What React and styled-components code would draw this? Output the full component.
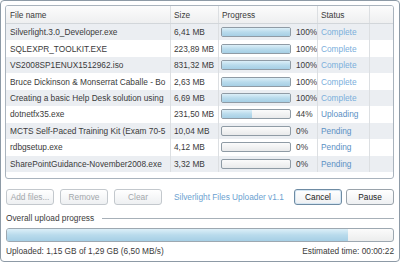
import React from 'react';
import styled, { createGlobalStyle } from 'styled-components';

const Global = createGlobalStyle`
  html, body { margin: 0; padding: 0; background: #fff; }
  body { font-family: "Liberation Sans", Arial, sans-serif; }
`;

const files = [
  { name: 'Silverlight.3.0_Developer.exe', size: '6,41 MB', pct: 100, status: 'Complete' },
  { name: 'SQLEXPR_TOOLKIT.EXE', size: '223,89 MB', pct: 100, status: 'Complete' },
  { name: 'VS2008SP1ENUX1512962.iso', size: '831,32 MB', pct: 100, status: 'Complete' },
  { name: 'Bruce Dickinson & Monserrat Caballe - Bo', size: '2,63 MB', pct: 100, status: 'Complete' },
  { name: 'Creating a basic Help Desk solution using', size: '6,69 MB', pct: 100, status: 'Complete' },
  { name: 'dotnetfx35.exe', size: '231,50 MB', pct: 44, status: 'Uploading' },
  { name: 'MCTS Self-Paced Training Kit (Exam 70-5', size: '10,04 MB', pct: 0, status: 'Pending' },
  { name: 'rdbgsetup.exe', size: '4,12 MB', pct: 0, status: 'Pending' },
  { name: 'SharePointGuidance-November2008.exe', size: '3,32 MB', pct: 0, status: 'Pending' },
];

const COLS = '165px 48px 99px 52px 1fr';

const Frame = styled.div`
  box-sizing: border-box;
  width: 400px;
  height: 262px;
  border: 1px solid #8d9aa6;
  border-radius: 4px;
  padding: 4px 5px 0 4px;
  display: flex;
  flex-direction: column;
  font-size: 8.3px;
  color: #3a3a3a;
`;

const Grid = styled.div`
  box-sizing: border-box;
  height: 174px;
  border: 1px solid #a9b3bd;
  border-radius: 3px;
  overflow: hidden;
  background: #fff;
`;

const HeaderRow = styled.div`
  display: grid;
  grid-template-columns: ${COLS};
  height: 17px;
  border-bottom: 1px solid #d2d6da;
  background: linear-gradient(#fcfcfc, #eeeff0);
`;

const Row = styled.div`
  display: grid;
  grid-template-columns: ${COLS};
  height: 16.45px;
  background: ${p => (p.$alt ? '#ebeef2' : '#fff')};
`;

const Cell = styled.div`
  display: flex;
  align-items: center;
  padding-left: ${p => p.$pad ?? 3}px;
  border-right: 1px solid #dcdfe2;
  white-space: nowrap;
  overflow: hidden;
  min-width: 0;
  &:last-child { border-right: none; }
`;

const Bar = styled.div`
  box-sizing: border-box;
  width: 70px;
  height: 10px;
  border: 1px solid #8f9ba5;
  border-radius: 2px;
  background: linear-gradient(#fbfbfb, #e9eaeb);
  overflow: hidden;
  flex: none;
`;

const Fill = styled.div`
  height: 100%;
  background: linear-gradient(#dceff8, #b9dbec 50%, #a6cfe5);
`;

const Pct = styled.span`
  margin-left: 5px;
`;

const Status = styled.span`
  color: ${p => (p.$done ? '#7aaedb' : '#5c90c4')};
`;

const Toolbar = styled.div`
  display: flex;
  align-items: center;
  margin-top: 10px;
  height: 16px;
  padding-left: 1px;
`;

const Button = styled.button`
  box-sizing: border-box;
  width: 48px;
  height: 16px;
  margin-right: ${p => p.$gap ?? 6}px;
  padding: 0;
  font: inherit;
  border: 1px solid ${p => (p.$focus ? '#6e8ba3' : p.disabled ? '#c3c8cd' : '#9aa3ab')};
  border-radius: 3px;
  background: linear-gradient(#ffffff, #eef0f2);
  color: ${p => (p.disabled ? '#a3a7ab' : '#222')};
  box-shadow: ${p => (p.$focus ? 'inset 0 0 0 1px #d5e6f3' : 'none')};
`;

const Brand = styled.span`
  color: #6b9fd0;
  margin-left: 6px;
  flex: 1;
`;

const SectionTitle = styled.div`
  display: flex;
  align-items: center;
  margin-top: 7px;
  height: 12px;
  padding-left: 1px;
  &::after {
    content: '';
    flex: 1;
    height: 1px;
    margin-left: 8px;
    background: #a7b0b8;
  }
`;

const BigBar = styled.div`
  box-sizing: border-box;
  margin: 4px 0 0 1px;
  height: 14px;
  border: 1px solid #9da8b1;
  border-radius: 3px;
  background: linear-gradient(#fbfbfb, #eceded);
  overflow: hidden;
`;

const Footer = styled.div`
  display: flex;
  justify-content: space-between;
  margin-top: 4px;
  padding-left: 1px;
`;

export default function App() {
  return (
    <>
      <Global />
      <Frame>
        <Grid>
          <HeaderRow>
            <Cell $pad={4}>File name</Cell>
            <Cell>Size</Cell>
            <Cell>Progress</Cell>
            <Cell>Status</Cell>
            <Cell />
          </HeaderRow>
          {files.map((f, i) => (
            <Row key={f.name} $alt={i % 2 === 0}>
              <Cell $pad={4}>{f.name}</Cell>
              <Cell>{f.size}</Cell>
              <Cell $pad={2}>
                <Bar>
                  <Fill style={{ width: f.pct + '%' }} />
                </Bar>
                <Pct>{f.pct}%</Pct>
              </Cell>
              <Cell>
                <Status $done={f.status === 'Complete'}>{f.status}</Status>
              </Cell>
              <Cell />
            </Row>
          ))}
        </Grid>
        <Toolbar>
          <Button disabled>Add files...</Button>
          <Button disabled>Remove</Button>
          <Button disabled>Clear</Button>
          <Brand>Silverlight Files Uploader v1.1</Brand>
          <Button $focus $gap={4}>Cancel</Button>
          <Button $gap={0}>Pause</Button>
        </Toolbar>
        <SectionTitle>Overall upload progress</SectionTitle>
        <BigBar>
          <Fill style={{ width: '88.4%' }} />
        </BigBar>
        <Footer>
          <span>Uploaded: 1,15 GB of 1,29 GB (6,50 MB/s)</span>
          <span>Estimated time: 00:00:22</span>
        </Footer>
      </Frame>
    </>
  );
}
